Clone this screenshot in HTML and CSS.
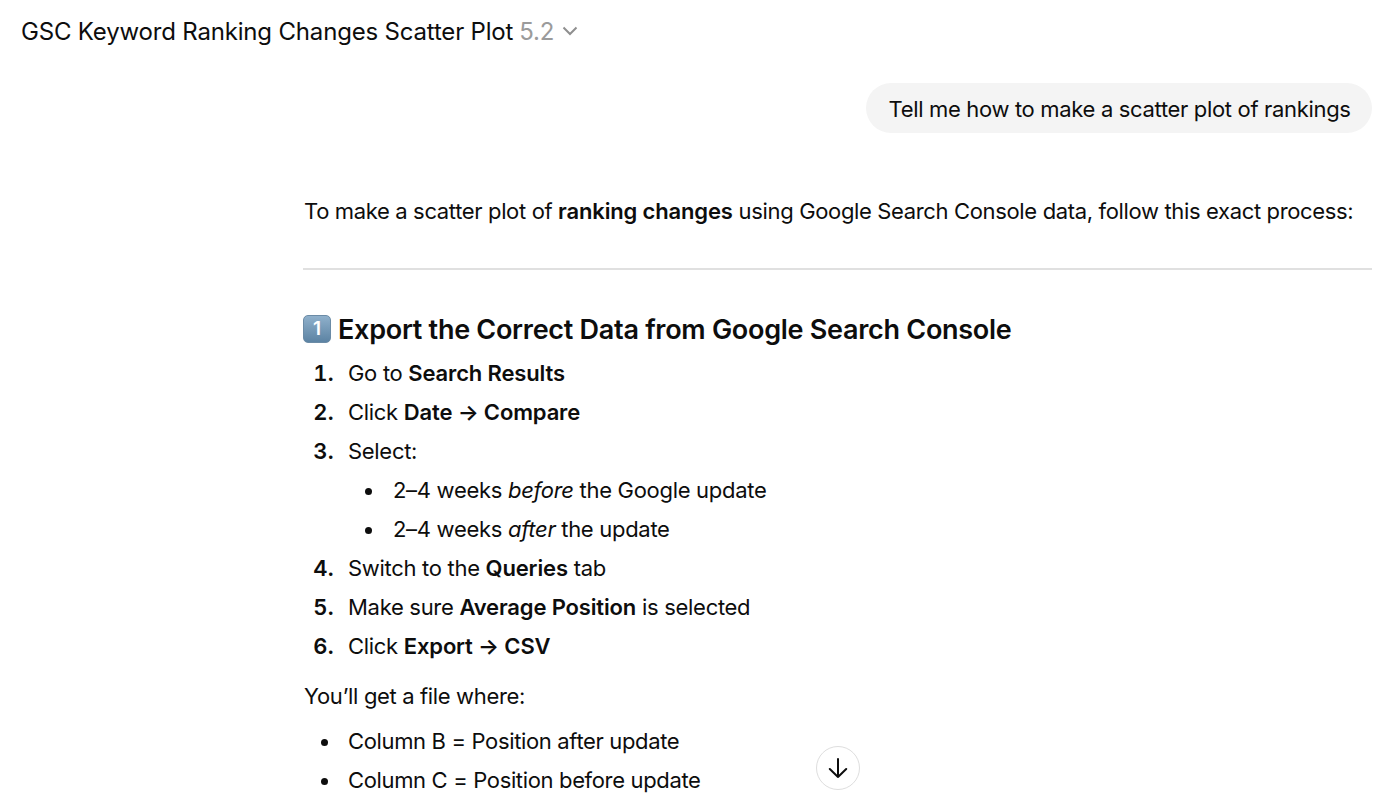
FILE: index.html
```html
<!DOCTYPE html>
<html lang="en">
<head>
    <meta charset="UTF-8">
    <meta name="viewport" content="width=device-width, initial-scale=1.0">
    <title>GSC Keyword Ranking Changes Scatter Plot</title>
    <link rel="stylesheet" href="styles.css">
</head>
<body>

    <!-- Chat title and model version -->
    <header class="topbar">
        <h1 class="chat-title">GSC Keyword Ranking Changes Scatter Plot</h1>
        <span class="version">5.2</span>
        <svg class="chevron" viewBox="0 0 16 10" width="16" height="10"><path d="M1.5 1.5 L8 8 L14.5 1.5"/></svg>
    </header>

    <main class="thread">
        <div class="user-message">Tell me how to make a scatter plot of rankings</div>

        <article class="answer">
            <p class="intro">To make a scatter plot of <strong>ranking changes</strong> using Google Search Console data, follow this exact process:</p>
            <hr>

            <h2 class="step-title">
                <span class="keycap">1</span>
                <span>Export the Correct Data from Google Search Console</span>
            </h2>

            <ol class="steps">
                <li>Go to <strong>Search Results</strong></li>
                <li>Click <strong>Date → Compare</strong></li>
                <li>Select:
                    <ul class="sub">
                        <li>2–4 weeks <em>before</em> the Google update</li>
                        <li>2–4 weeks <em>after</em> the update</li>
                    </ul>
                </li>
                <li>Switch to the <strong>Queries</strong> tab</li>
                <li>Make sure <strong>Average Position</strong> is selected</li>
                <li>Click <strong>Export → CSV</strong></li>
            </ol>

            <p class="result">You’ll get a file where:</p>
            <ul class="columns">
                <li>Column B = Position after update</li>
                <li>Column C = Position before update</li>
            </ul>
        </article>
    </main>

    <!-- Scroll to the latest message -->
    <button class="scroll-down" aria-label="Scroll to bottom">
        <svg viewBox="0 0 20 22" width="20" height="22"><path d="M10 2 V20 M1.8 12 L10 20 L18.2 12"/></svg>
    </button>

</body>
</html>
```
FILE: styles.css
```css
* {
    margin: 0;
    padding: 0;
    box-sizing: border-box;
}

body {
    height: 810px;
    overflow: hidden;
    background: #fff;
    color: #0d0d0d;
    font-family: Inter, "Liberation Sans", sans-serif;
    font-size: 22px;
    line-height: 39px;
    letter-spacing: -0.35px;
}

/* Header */
.topbar {
    display: flex;
    align-items: center;
    height: 62px;
    padding-left: 21px;
    font-size: 24px;
    letter-spacing: -0.18px;
}

.chat-title {
    font-size: 24px;
    font-weight: 400;
}

.version {
    margin-left: 6px;
    color: #9b9b9b;
}

.chevron {
    margin-left: 8px;
    fill: none;
    stroke: #8f8f8f;
    stroke-width: 2;
}

/* Conversation */
.thread {
    display: flex;
    flex-direction: column;
    width: 1069px;
    margin-left: 303px;
    padding-top: 21px;
}

.user-message {
    align-self: flex-end;
    width: 506px;
    height: 50px;
    padding-left: 22.5px;
    border-radius: 25px;
    background: #f4f4f4;
    line-height: 52px;
    letter-spacing: -0.33px;
    white-space: nowrap;
}

.answer {
    padding-top: 59px;
    white-space: nowrap;
}

.intro, .result {
    padding-left: 1px;
}

strong {
    font-weight: 600;
    letter-spacing: -0.15px;
}

hr {
    margin-top: 37px;
    border: none;
    border-top: 2px solid #e0e0e0;
}

.step-title {
    display: flex;
    align-items: center;
    height: 40px;
    margin-top: 39px;
    font-size: 27px;
    font-weight: 600;
    letter-spacing: -0.28px;
}

.keycap {
    width: 28px;
    height: 28px;
    margin-right: 7px;
    border: 1px solid #6b8ba6;
    border-radius: 5px;
    background: linear-gradient(#8fb0cb, #5c83a3);
    color: #fff;
    font-size: 19px;
    line-height: 25px;
    text-align: center;
}

/* Lists */
ol, ul {
    list-style: none;
}

.steps {
    margin-top: 5px;
    counter-reset: step;
    letter-spacing: -0.3px;
}

.steps > li {
    position: relative;
    padding-left: 45px;
    counter-increment: step;
}

.steps > li::before {
    content: counter(step) ".";
    position: absolute;
    left: 0;
    width: 31px;
    font-weight: 600;
    font-variant-numeric: tabular-nums;
    letter-spacing: 0.3px;
    text-align: right;
}

.sub li, .columns li {
    position: relative;
    padding-left: 45px;
}

.sub li::before, .columns li::before {
    content: "";
    position: absolute;
    top: 17px;
    left: 17px;
    width: 7px;
    height: 7px;
    border-radius: 50%;
    background: #0d0d0d;
}

.result {
    margin-top: 11px;
}

.columns {
    margin-top: 6px;
}

.columns li::before {
    left: 18px;
}

/* Floating button over the thread */
.scroll-down {
    position: absolute;
    top: 746px;
    left: 816px;
    display: flex;
    align-items: center;
    justify-content: center;
    width: 44px;
    height: 44px;
    border: 1px solid #dedede;
    border-radius: 50%;
    background: #fff;
}

.scroll-down svg {
    fill: none;
    stroke: #0d0d0d;
    stroke-width: 2;
    stroke-linecap: round;
    stroke-linejoin: round;
}
```
